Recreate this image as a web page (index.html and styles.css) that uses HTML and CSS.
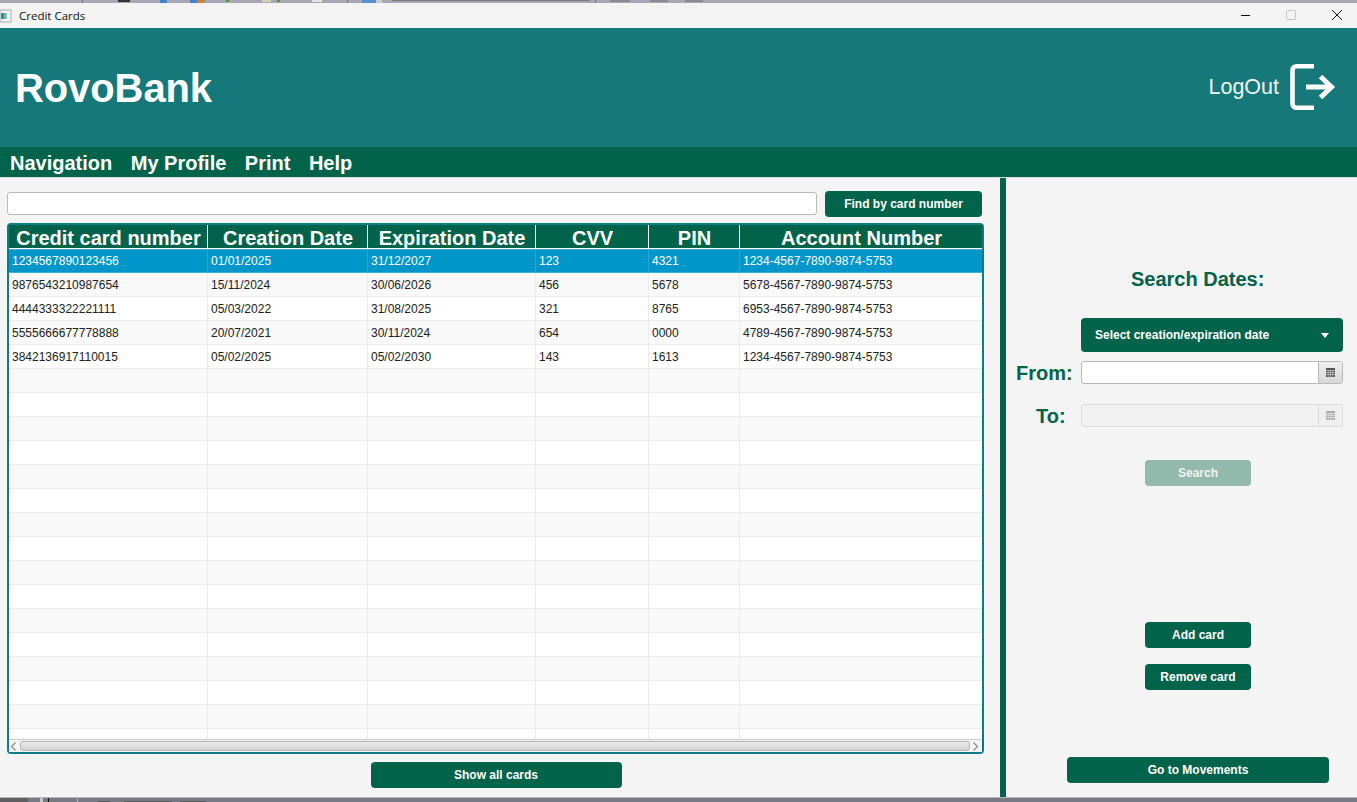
FILE: index.html
```html
<!DOCTYPE html>
<html lang="en">
<head>
    <meta charset="UTF-8">
    <meta name="viewport" content="width=device-width, initial-scale=1.0">
    <title>Credit Cards</title>
    <link rel="stylesheet" href="styles.css">
</head>
<body>
    <svg class="desktop-top" width="1357" height="3" viewBox="0 0 1357 3">
        <rect width="1357" height="3" fill="#a6a6b4"/>
        <rect x="82" width="1" height="3" fill="#777"/>
        <rect x="118" width="12" height="2" fill="#333"/>
        <rect x="160" width="7" height="3" fill="#3f86c9"/>
        <rect x="190" width="7" height="3" fill="#3f86c9"/>
        <rect x="197" width="8" height="3" fill="#c08a3c"/>
        <rect x="226" width="3" height="2" fill="#4c9a2a"/>
        <rect x="262" width="9" height="2" fill="#d8cfa8"/>
        <rect x="277" width="3" height="2" fill="#4c9a2a"/>
        <rect x="312" width="10" height="2" fill="#e4e4e4"/>
        <rect x="347" width="1" height="3" fill="#777"/>
        <rect x="362" width="14" height="3" fill="#5b8ed6"/>
        <rect x="376" width="6" height="3" fill="#ccc"/>
        <rect x="392" width="198" height="1" fill="#777"/>
        <rect x="595" width="1" height="3" fill="#777"/>
        <rect x="610" width="20" height="2" fill="#8a8a92"/>
        <rect x="650" width="18" height="2" fill="#8a8a92"/>
        <rect x="685" width="18" height="2" fill="#8a8a92"/>
    </svg>
    <div class="titlebar">
        <div class="title-left">
            <svg class="app-icon" width="12" height="14" viewBox="0 0 12 14">
                <rect x="0" y="1" width="11" height="12" fill="#f4f4f4" stroke="#aaa"/>
                <rect x="1" y="4" width="3" height="6" fill="#3b8d7e"/>
                <rect x="4" y="4" width="3" height="6" fill="#7fb5c9"/>
            </svg>
            <span>Credit Cards</span>
        </div>
        <div class="window-buttons">
            <svg width="12" height="12" viewBox="0 0 12 12"><path d="M2 6.5h9" stroke="#111" fill="none"/></svg>
            <svg width="12" height="12" viewBox="0 0 12 12"><rect x="1.5" y="1.5" width="9" height="9" rx="1" stroke="#c4c4c4" fill="none"/></svg>
            <svg width="12" height="12" viewBox="0 0 12 12"><path d="M1 1l10 10M11 1L1 11" stroke="#111" fill="none"/></svg>
        </div>
    </div>

    <header class="banner">
        <h1>RovoBank</h1>
        <a class="logout" href="#">
            <span>LogOut</span>
            <svg width="47" height="46" viewBox="0 0 47 46">
                <path d="M24 2.3H6.5a4 4 0 0 0-4 4v33.4a4 4 0 0 0 4 4H24" fill="none" stroke="#fff" stroke-width="4.6"/>
                <path d="M16 23h26" fill="none" stroke="#fff" stroke-width="5"/>
                <path d="M30.5 12.5l11 10.5-11 10.5" fill="none" stroke="#fff" stroke-width="5"/>
            </svg>
        </a>
    </header>
    <nav class="menubar">
        <a href="#">Navigation</a>
        <a href="#">My Profile</a>
        <a href="#">Print</a>
        <a href="#">Help</a>
    </nav>

    <main class="content">
        <section class="left-pane">
            <div class="find-row">
                <input class="find-input" type="text">
                <button class="btn find-btn">Find by card number</button>
            </div>
            <div class="table-box">
                <div class="table-clip">
                    <table class="cards">
                        <colgroup>
                            <col class="col-1"><col class="col-2"><col class="col-3">
                            <col class="col-4"><col class="col-5"><col class="col-6">
                        </colgroup>
                        <thead>
                            <tr>
                                <th>Credit card number</th>
                                <th>Creation Date</th>
                                <th>Expiration Date</th>
                                <th>CVV</th>
                                <th>PIN</th>
                                <th>Account Number</th>
                            </tr>
                        </thead>
                        <tbody>
                            <tr class="selected"><td>1234567890123456</td><td>01/01/2025</td><td>31/12/2027</td><td>123</td><td>4321</td><td>1234-4567-7890-9874-5753</td></tr>
                            <tr><td>9876543210987654</td><td>15/11/2024</td><td>30/06/2026</td><td>456</td><td>5678</td><td>5678-4567-7890-9874-5753</td></tr>
                            <tr><td>4444333322221111</td><td>05/03/2022</td><td>31/08/2025</td><td>321</td><td>8765</td><td>6953-4567-7890-9874-5753</td></tr>
                            <tr><td>5555666677778888</td><td>20/07/2021</td><td>30/11/2024</td><td>654</td><td>0000</td><td>4789-4567-7890-9874-5753</td></tr>
                            <tr><td>3842136917110015</td><td>05/02/2025</td><td>05/02/2030</td><td>143</td><td>1613</td><td>1234-4567-7890-9874-5753</td></tr>
                            <tr><td></td><td></td><td></td><td></td><td></td><td></td></tr>
                            <tr><td></td><td></td><td></td><td></td><td></td><td></td></tr>
                            <tr><td></td><td></td><td></td><td></td><td></td><td></td></tr>
                            <tr><td></td><td></td><td></td><td></td><td></td><td></td></tr>
                            <tr><td></td><td></td><td></td><td></td><td></td><td></td></tr>
                            <tr><td></td><td></td><td></td><td></td><td></td><td></td></tr>
                            <tr><td></td><td></td><td></td><td></td><td></td><td></td></tr>
                            <tr><td></td><td></td><td></td><td></td><td></td><td></td></tr>
                            <tr><td></td><td></td><td></td><td></td><td></td><td></td></tr>
                            <tr><td></td><td></td><td></td><td></td><td></td><td></td></tr>
                            <tr><td></td><td></td><td></td><td></td><td></td><td></td></tr>
                            <tr><td></td><td></td><td></td><td></td><td></td><td></td></tr>
                            <tr><td></td><td></td><td></td><td></td><td></td><td></td></tr>
                            <tr><td></td><td></td><td></td><td></td><td></td><td></td></tr>
                            <tr><td></td><td></td><td></td><td></td><td></td><td></td></tr>
                            <tr><td></td><td></td><td></td><td></td><td></td><td></td></tr>
                        </tbody>
                    </table>
                </div>
                <div class="hscroll">
                    <svg width="7" height="9" viewBox="0 0 7 9"><path d="M5.5 .5l-4 4 4 4" fill="none" stroke="#8a8a8a" stroke-width="1.2"/></svg>
                    <div class="hscroll-thumb"></div>
                    <svg width="7" height="9" viewBox="0 0 7 9"><path d="M1.5 .5l4 4-4 4" fill="none" stroke="#8a8a8a" stroke-width="1.2"/></svg>
                </div>
            </div>
            <div class="show-row">
                <button class="btn show-btn">Show all cards</button>
            </div>
        </section>

        <aside class="side-pane">
            <h2 class="search-title">Search Dates:</h2>
            <button class="btn select-btn">
                <span>Select creation/expiration date</span>
                <svg width="8" height="5" viewBox="0 0 8 5"><path d="M0 0h8L4 5z" fill="#fff"/></svg>
            </button>
            <div class="date-row">
                <label class="date-label">From:</label>
                <div class="date-field">
                    <input type="text">
                    <span class="cal-btn">
                        <svg width="9" height="9" viewBox="0 0 9 9"><path d="M0 0h9v9H0z" fill="#555"/><path d="M0 2.5h9M0 4.5h9M0 6.5h9M2.2 2v7M4.5 2v7M6.8 2v7" stroke="#ddd" stroke-width=".6"/></svg>
                    </span>
                </div>
            </div>
            <div class="date-row to-row">
                <label class="date-label to-label">To:</label>
                <div class="date-field disabled">
                    <input type="text" disabled>
                    <span class="cal-btn">
                        <svg width="9" height="9" viewBox="0 0 9 9"><path d="M0 0h9v9H0z" fill="#aaa"/><path d="M0 2.5h9M0 4.5h9M0 6.5h9M2.2 2v7M4.5 2v7M6.8 2v7" stroke="#eee" stroke-width=".6"/></svg>
                    </span>
                </div>
            </div>
            <button class="btn small-btn search-btn">Search</button>
            <button class="btn small-btn add-btn">Add card</button>
            <button class="btn small-btn remove-btn">Remove card</button>
            <button class="btn movements-btn">Go to Movements</button>
        </aside>
    </main>
    <svg class="desktop-bottom" width="1357" height="5" viewBox="0 0 1357 5">
        <rect width="1357" height="5" fill="#7a7a84"/>
        <rect width="1357" height="1" fill="#b5b5b5"/>
        <rect y="1" width="28" height="4" fill="#5f5f62"/>
        <rect x="40" y="1" width="3" height="4" fill="#c8c8c8"/>
        <rect x="48" y="1" width="1" height="4" fill="#111"/>
        <rect x="77" y="1" width="1" height="4" fill="#b0b0b8"/>
        <rect x="98" y="4" width="12" height="1" fill="#55555c"/>
        <rect x="124" y="4" width="48" height="1" fill="#55555c"/>
        <rect x="180" y="4" width="26" height="1" fill="#55555c"/>
    </svg>
</body>
</html>
```

FILE: styles.css
```css
* {
    box-sizing: border-box;
}
html, body {
    height: 100%;
}
body {
    font-family: "Liberation Sans", Arial, sans-serif;
    margin: 0;
    padding: 0;
    height: 802px;
    overflow: hidden;
    background-color: #f4f4f4;
    display: flex;
    flex-direction: column;
}
.desktop-top,
.desktop-bottom {
    display: block;
    flex: none;
}
.titlebar {
    height: 25px;
    background-color: #f3f3f3;
    display: flex;
    justify-content: space-between;
    align-items: center;
    font-family: "Open Sans", sans-serif;
    font-size: 11.5px;
    color: #111;
}
.title-left {
    display: flex;
    align-items: center;
    gap: 7px;
}
.app-icon {
    margin-top: 1px;
}
.window-buttons {
    display: flex;
    gap: 34px;
    padding-right: 14px;
    padding-bottom: 1px;
}
.banner {
    height: 119px;
    background-color: #167878;
    color: #fff;
    display: flex;
    justify-content: space-between;
    align-items: center;
    padding: 1px 20px 0 15px;
}
.banner h1 {
    margin: 0;
    font-size: 40px;
    font-weight: bold;
    letter-spacing: -.1px;
}
.logout {
    color: #eef6f5;
    text-decoration: none;
    display: flex;
    align-items: center;
    gap: 11px;
    font-size: 21.5px;
    margin-top: -2px;
}
.menubar {
    height: 30px;
    background-color: #00634a;
    display: flex;
    align-items: center;
    gap: 18.5px;
    padding: 2px 0 0 10px;
}
.menubar a {
    color: #fff;
    text-decoration: none;
    font-size: 20px;
    font-weight: bold;
}
.content {
    height: 620px;
    display: flex;
    border-top: 1px solid #d8d8d8;
}
.left-pane {
    width: 1000px;
    padding: 13px 0 0 7px;
}
.find-row {
    display: flex;
    gap: 8px;
    height: 26px;
    width: 975px;
}
.find-input {
    flex: 1;
    height: 23px;
    margin-top: 1px;
    border: 1px solid #bbb;
    border-radius: 3px;
    background-color: #fff;
}
.btn {
    border: none;
    border-radius: 4px;
    background-color: #00634a;
    color: #fff;
    font-family: "Liberation Sans", Arial, sans-serif;
    font-size: 12px;
    font-weight: bold;
    cursor: pointer;
}
.find-btn {
    width: 157px;
}
.table-box {
    width: 977px;
    height: 531px;
    margin-top: 6px;
    border: 2px solid #0e7c86;
    border-radius: 4px;
    background-color: #fff;
    display: flex;
    flex-direction: column;
}
.table-clip {
    height: 514px;
    overflow: hidden;
}
.cards {
    width: 973px;
    border-collapse: separate;
    border-spacing: 0;
    table-layout: fixed;
    color: #222;
    font-size: 12px;
}
.col-1 { width: 199px; }
.col-2 { width: 160px; }
.col-3 { width: 168px; }
.col-4 { width: 113px; }
.col-5 { width: 91px; }
.col-6 { width: 242px; }
.cards th {
    height: 24px;
    padding: 4px 0 0 1px;
    background-color: #00634a;
    color: #fff;
    font-size: 20px;
    line-height: 19px;
    font-weight: bold;
    border-right: 1px solid #fff;
    border-bottom: 1px solid #fff;
    white-space: nowrap;
}
.cards th:last-child {
    border-right: none;
}
.cards td {
    height: 24px;
    padding: 0 0 0 3px;
    border-right: 1px solid #ececec;
    border-bottom: 1px solid #ececec;
    white-space: nowrap;
}
.cards td:last-child {
    border-right: none;
}
.cards tbody tr:nth-child(even) td {
    background-color: #f9f9f9;
}
.cards tbody tr.selected td {
    background-color: #0096c9;
    color: #fff;
    border-top: 1px solid #3ab0d8;
    border-bottom: 1px solid #3ab0d8;
    border-right-color: #2ba6d2;
}
.hscroll {
    height: 13px;
    border-top: 1px solid #ccc;
    background-color: #f4f4f4;
    display: flex;
    align-items: center;
    padding: 0 3px 0 1px;
}
.hscroll-thumb {
    flex: 1;
    height: 10px;
    margin: 0 2px 0 3px;
    border: 1px solid #b4b4b4;
    border-radius: 3px;
    background: linear-gradient(#ececec, #d2d2d2);
}
.show-row {
    display: flex;
    justify-content: center;
    width: 978px;
    padding-top: 8px;
}
.show-btn {
    width: 251px;
    height: 26px;
}
.side-pane {
    width: 357px;
    border-left: 6px solid #00634a;
    display: flex;
    flex-direction: column;
}
.search-title {
    margin: 89px 0 0;
    padding-left: 125px;
    color: #00634a;
    font-size: 20px;
    line-height: 24px;
    font-weight: bold;
}
.select-btn {
    width: 262px;
    height: 34px;
    margin: 27px 0 0 75px;
    padding: 0 14px;
    display: flex;
    justify-content: space-between;
    align-items: center;
}
.date-row {
    display: flex;
    align-items: center;
    height: 24px;
    margin-top: 8px;
}
.to-row {
    margin-top: 19px;
}
.date-label {
    width: 75px;
    padding: 2px 0 0 10px;
    color: #00634a;
    font-size: 20px;
    font-weight: bold;
}
.to-label {
    padding-left: 30px;
}
.date-field {
    width: 262px;
    height: 23px;
    display: flex;
    border: 1px solid #b8b8b8;
    border-radius: 3px;
    background-color: #fff;
    overflow: hidden;
}
.date-field input {
    flex: 1;
    min-width: 0;
    border: none;
    padding: 0;
    background: transparent;
}
.cal-btn {
    width: 24px;
    display: flex;
    align-items: center;
    justify-content: center;
    border-left: 1px solid #b8b8b8;
    background: linear-gradient(#efefef, #d8d8d8);
}
.date-field.disabled {
    border-color: #dcdcdc;
    background-color: #f1f1f1;
}
.date-field.disabled .cal-btn {
    border-left-color: #dcdcdc;
    background: #efefef;
}
.small-btn {
    width: 106px;
    height: 26px;
    margin-left: 139px;
}
.search-btn {
    margin-top: 33px;
    background-color: #93b9ad;
    color: #eef4f2;
}
.add-btn {
    margin-top: 136px;
}
.remove-btn {
    margin-top: 16px;
}
.movements-btn {
    width: 262px;
    height: 26px;
    margin: 67px 0 0 61px;
}
```
